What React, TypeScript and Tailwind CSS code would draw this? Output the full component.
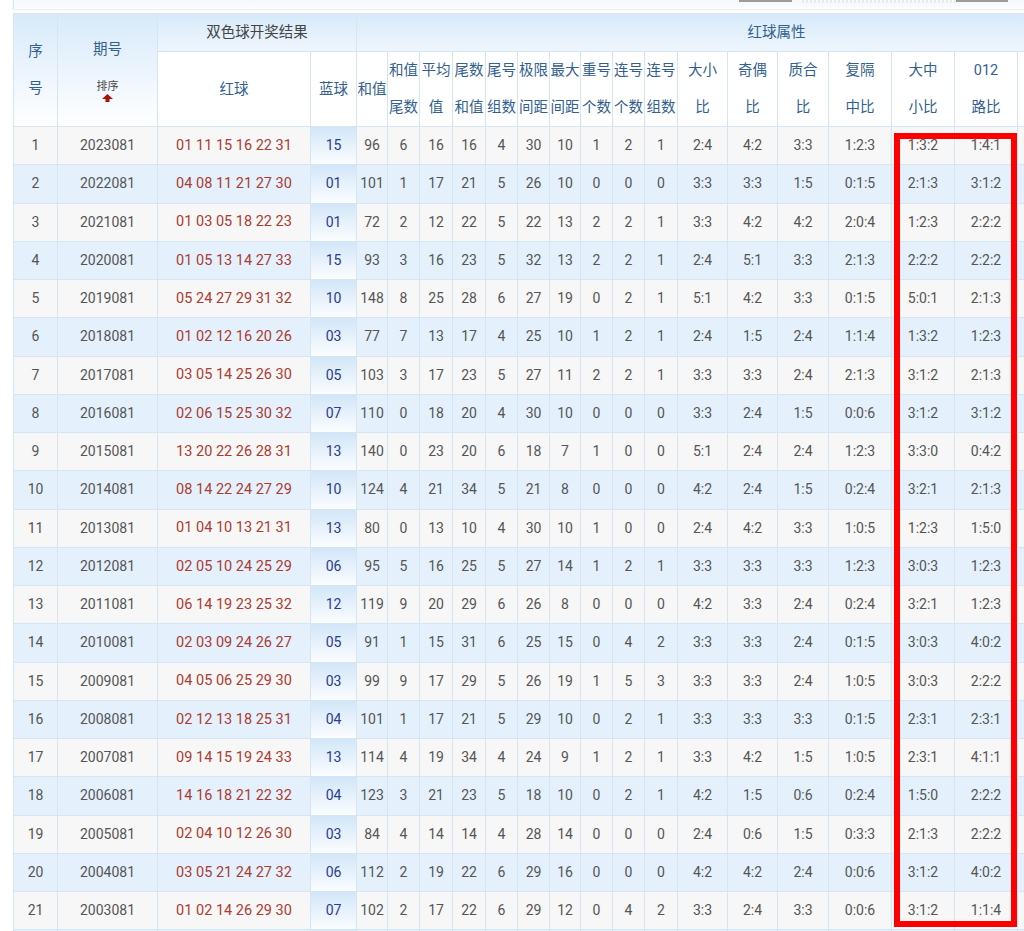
const rows: string[][] = [
  ["1", "2023081", "01 11 15 16 22 31", "15", "96", "6", "16", "16", "4", "30", "10", "1", "2", "1", "2:4", "4:2", "3:3", "1:2:3", "1:3:2", "1:4:1"],
  ["2", "2022081", "04 08 11 21 27 30", "01", "101", "1", "17", "21", "5", "26", "10", "0", "0", "0", "3:3", "3:3", "1:5", "0:1:5", "2:1:3", "3:1:2"],
  ["3", "2021081", "01 03 05 18 22 23", "01", "72", "2", "12", "22", "5", "22", "13", "2", "2", "1", "3:3", "4:2", "4:2", "2:0:4", "1:2:3", "2:2:2"],
  ["4", "2020081", "01 05 13 14 27 33", "15", "93", "3", "16", "23", "5", "32", "13", "2", "2", "1", "2:4", "5:1", "3:3", "2:1:3", "2:2:2", "2:2:2"],
  ["5", "2019081", "05 24 27 29 31 32", "10", "148", "8", "25", "28", "6", "27", "19", "0", "2", "1", "5:1", "4:2", "3:3", "0:1:5", "5:0:1", "2:1:3"],
  ["6", "2018081", "01 02 12 16 20 26", "03", "77", "7", "13", "17", "4", "25", "10", "1", "2", "1", "2:4", "1:5", "2:4", "1:1:4", "1:3:2", "1:2:3"],
  ["7", "2017081", "03 05 14 25 26 30", "05", "103", "3", "17", "23", "5", "27", "11", "2", "2", "1", "3:3", "3:3", "2:4", "2:1:3", "3:1:2", "2:1:3"],
  ["8", "2016081", "02 06 15 25 30 32", "07", "110", "0", "18", "20", "4", "30", "10", "0", "0", "0", "3:3", "2:4", "1:5", "0:0:6", "3:1:2", "3:1:2"],
  ["9", "2015081", "13 20 22 26 28 31", "13", "140", "0", "23", "20", "6", "18", "7", "1", "0", "0", "5:1", "2:4", "2:4", "1:2:3", "3:3:0", "0:4:2"],
  ["10", "2014081", "08 14 22 24 27 29", "10", "124", "4", "21", "34", "5", "21", "8", "0", "0", "0", "4:2", "2:4", "1:5", "0:2:4", "3:2:1", "2:1:3"],
  ["11", "2013081", "01 04 10 13 21 31", "13", "80", "0", "13", "10", "4", "30", "10", "1", "0", "0", "2:4", "4:2", "3:3", "1:0:5", "1:2:3", "1:5:0"],
  ["12", "2012081", "02 05 10 24 25 29", "06", "95", "5", "16", "25", "5", "27", "14", "1", "2", "1", "3:3", "3:3", "3:3", "1:2:3", "3:0:3", "1:2:3"],
  ["13", "2011081", "06 14 19 23 25 32", "12", "119", "9", "20", "29", "6", "26", "8", "0", "0", "0", "4:2", "3:3", "2:4", "0:2:4", "3:2:1", "1:2:3"],
  ["14", "2010081", "02 03 09 24 26 27", "05", "91", "1", "15", "31", "6", "25", "15", "0", "4", "2", "3:3", "3:3", "2:4", "0:1:5", "3:0:3", "4:0:2"],
  ["15", "2009081", "04 05 06 25 29 30", "03", "99", "9", "17", "29", "5", "26", "19", "1", "5", "3", "3:3", "3:3", "2:4", "1:0:5", "3:0:3", "2:2:2"],
  ["16", "2008081", "02 12 13 18 25 31", "04", "101", "1", "17", "21", "5", "29", "10", "0", "2", "1", "3:3", "3:3", "3:3", "0:1:5", "2:3:1", "2:3:1"],
  ["17", "2007081", "09 14 15 19 24 33", "13", "114", "4", "19", "34", "4", "24", "9", "1", "2", "1", "3:3", "4:2", "1:5", "1:0:5", "2:3:1", "4:1:1"],
  ["18", "2006081", "14 16 18 21 22 32", "04", "123", "3", "21", "23", "5", "18", "10", "0", "2", "1", "4:2", "1:5", "0:6", "0:2:4", "1:5:0", "2:2:2"],
  ["19", "2005081", "02 04 10 12 26 30", "03", "84", "4", "14", "14", "4", "28", "14", "0", "0", "0", "2:4", "0:6", "1:5", "0:3:3", "2:1:3", "2:2:2"],
  ["20", "2004081", "03 05 21 24 27 32", "06", "112", "2", "19", "22", "6", "29", "16", "0", "0", "0", "4:2", "4:2", "2:4", "0:0:6", "3:1:2", "4:0:2"],
  ["21", "2003081", "01 02 14 26 29 30", "07", "102", "2", "17", "22", "6", "29", "12", "0", "4", "2", "3:3", "2:4", "3:3", "0:0:6", "3:1:2", "1:1:4"],
  ["", "", "", "", "", "", "", "", "", "", "", "", "", "", "", "", "", "", "", ""],
];

// second header row, after 红球 / 蓝球
const subHeads: string[][] = [
  ["和值"],
  ["和值", "尾数"],
  ["平均", "值"],
  ["尾数", "和值"],
  ["尾号", "组数"],
  ["极限", "间距"],
  ["最大", "间距"],
  ["重号", "个数"],
  ["连号", "个数"],
  ["连号", "组数"],
  ["大小", "比"],
  ["奇偶", "比"],
  ["质合", "比"],
  ["复隔", "中比"],
  ["大中", "小比"],
  ["012", "路比"],
  [],
  [],
  [],
];

const cell = "border-r border-b border-[#d6e5f2] flex items-center justify-center";
const head = "text-[14.5px] text-[#33618f] leading-[37px] text-center";

function SortArrow() {
  return (
    <svg width="11" height="8" viewBox="0 0 11 8">
      <path d="M5.5 0 L11 5 L7.5 5 L7.5 8 L3.5 8 L3.5 5 L0 5 Z" fill="#a8120f" />
    </svg>
  );
}

export default function App() {
  return (
    <div className="relative w-[1024px] h-[931px] overflow-hidden bg-white font-['Roboto','Noto_Sans_CJK_SC',sans-serif]">
      <div className="ml-[13px] h-[9px] border-l border-[#d6e5f2] bg-linear-to-b from-[#f4f9fd] to-[#fbfdff] shadow-[0_1px_2px_rgba(120,150,180,0.18)] flex">
        <div className="ml-[725px] w-[53px] h-[2px] bg-[#9c9c9c]" />
        <div className="ml-[10px] w-[154px] h-[3px] bg-[repeating-linear-gradient(90deg,#e6ebf0_0_2px,transparent_2px_4px)]" />
        <div className="w-[52px] h-[2px] bg-[#9c9c9c]" />
      </div>

      <div className="mt-[4px] ml-[13px] w-[1200px] grid grid-cols-[44px_100px_153px_46px_31px_32px_33px_33px_32px_32px_31px_32px_32px_33px_50px_50px_51px_63px_63px_63px_60px_60px_59px] grid-rows-[38px_75px] auto-rows-[38.25px] border-l border-t border-[#d6e5f2]">
        <div className={`${cell} row-span-2 bg-linear-to-b from-[#d7eafa] to-[#ffffff]`}>
          <div className={head}>
            <div>序</div>
            <div>号</div>
          </div>
        </div>
        <div className={`border-r border-b border-[#d6e5f2] row-span-2 bg-linear-to-b from-[#d7eafa] to-[#ffffff] flex flex-col items-center pt-[17px]`}>
          <div className={head}>期号</div>
          <div className="mt-[12px] text-[11px] leading-[14px] text-[#4a4a4a]">排序</div>
          <SortArrow />
        </div>
        <div className={`${cell} col-span-2 bg-linear-to-b from-[#d7eafa] to-[#eef6fd]`}>
          <span className="text-[14.5px] text-[#444]">双色球开奖结果</span>
        </div>
        <div className={`${cell} col-[span_19_/_span_19] bg-linear-to-b from-[#d7eafa] to-[#eef6fd]`}>
          <span className="text-[14.5px] text-[#33618f]">红球属性</span>
        </div>

        <div className={`${cell} bg-white`}>
          <span className={head}>红球</span>
        </div>
        <div className={`${cell} bg-white`}>
          <span className={head}>蓝球</span>
        </div>
        {subHeads.map((lines, i) => (
          <div key={i} className={`${cell} bg-white`}>
            <div className={head}>
              {lines.map((l) => (
                <div key={l}>{l}</div>
              ))}
            </div>
          </div>
        ))}

        {rows.map((r, ri) => {
          const bg = ri % 2 === 0 ? "bg-[#f7f7f7]" : "bg-[#e4f1fc]";
          return [
            ...r.map((v, ci) => {
              let tone = "text-[#555] text-[14px]";
              let fill = bg;
              if (ci === 2) tone = "text-[#ad3b30] text-[14.5px]";
              if (ci === 3) {
                tone = "text-[#2b3c92] text-[14px]";
                fill = "bg-linear-to-b from-[#d2e6f8] to-[#fbfdff]";
              }
              return (
                <div key={`${ri}-${ci}`} className={`${cell} ${fill} ${tone}`}>
                  {v}
                </div>
              );
            }),
            <div key={`${ri}-x1`} className={`${cell} ${bg}`} />,
            <div key={`${ri}-x2`} className={`${cell} ${bg}`} />,
            <div key={`${ri}-x3`} className={`${cell} ${bg}`} />,
          ];
        })}
      </div>

      <div className="absolute left-[894px] top-[133px] w-[123px] h-[794px] border-[6px] border-[#ff0000] pointer-events-none" />
    </div>
  );
}
